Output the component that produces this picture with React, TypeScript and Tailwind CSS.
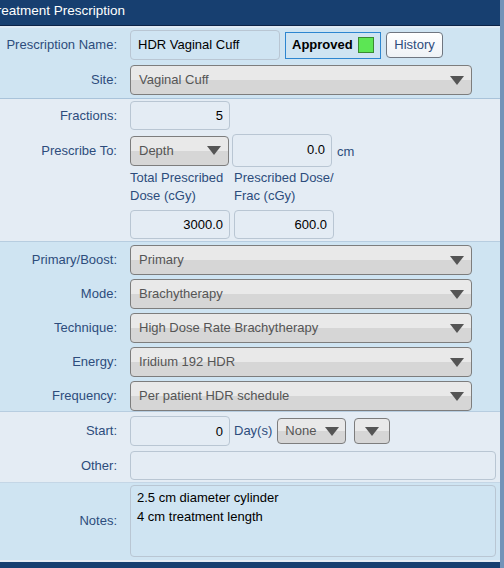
import React from 'react';

const Caret = () => (
  <svg width="14" height="9" viewBox="0 0 14 9" className="shrink-0">
    <path d="M0 0 H14 L7 9 Z" fill="#555" />
  </svg>
);

function Select({ value, className = '' }: { value: string; className?: string }) {
  return (
    <div
      className={`flex h-[30px] items-center justify-between rounded-[4px] border border-[#7d7d7d] bg-[linear-gradient(#e9e9e9_0%,#e9e9e9_50%,#d6d6d6_50%,#d6d6d6_100%)] pl-[8px] pr-[7px] text-[13px] text-[#555] ${className}`}
    >
      <span>{value}</span>
      <Caret />
    </div>
  );
}

function Input({ value = '', className = '', align = 'right' }: { value?: string; className?: string; align?: 'left' | 'right' }) {
  return (
    <div
      className={`flex h-[29px] items-center rounded-[4px] border border-[#b9c6d3] px-[6px] text-[13px] text-black ${align === 'right' ? 'justify-end' : ''} ${className}`}
    >
      {value}
    </div>
  );
}

function Label({ children }: { children: React.ReactNode }) {
  return <div className="w-[118px] shrink-0 pr-[1px] text-right text-[13px] text-[#2d4c7c]">{children}</div>;
}

function Row({ label, children, className = '' }: { label: string; children: React.ReactNode; className?: string }) {
  return (
    <div className={`flex items-center gap-[12px] ${className}`}>
      <Label>{label}</Label>
      {children}
    </div>
  );
}

export default function App() {
  return (
    <div className="flex h-[568px] w-[504px] overflow-hidden font-['Liberation_Sans',Arial,sans-serif]">
      <div className="flex w-[500px] flex-col bg-[#cfe4f2]">
        <div className="h-[26px] shrink-0 overflow-hidden border-b border-[#0b2246] bg-[#173f70]">
          <div className="ml-[-11px] whitespace-nowrap pt-[1px] text-[13.5px] leading-[20px] text-white">Treatment Prescription</div>
        </div>

        <div className="flex flex-col gap-[5px] border-t-2 border-b border-t-[#dfeaf4] border-b-[#a9c3da] bg-[#cfe4f2] pb-[3px] pt-[2px]">
          <Row label="Prescription Name:">
            <Input value="HDR Vaginal Cuff" align="left" className="h-[30px] w-[150px] pl-[7px]" />
            <div className="ml-[-7px] flex h-[27px] w-[96px] items-center gap-[5px] border border-[#2d86d0] pl-[6px] text-[13px] font-bold text-black">
              Approved
              <span className="h-[16px] w-[16px] border border-[#3a8a32] bg-[#5ce654]" />
            </div>
            <div className="ml-[-7px] flex h-[26px] w-[57px] items-center justify-center rounded-[4px] border border-[#6f7680] bg-[linear-gradient(#ffffff,#eef2f6)] text-[13px] text-[#2d4c7c]">
              History
            </div>
          </Row>
          <Row label="Site:">
            <Select value="Vaginal Cuff" className="w-[342px]" />
          </Row>
        </div>

        <div className="flex flex-col border-b border-[#b7cde0] bg-[#e4ecf4] pb-[2px] pt-[2px]">
          <Row label="Fractions:">
            <Input value="5" className="w-[100px]" />
          </Row>
          <Row label="Prescribe To:" className="mt-[4px]">
            <Select value="Depth" className="w-[99px]" />
            <div className="ml-[-9px] flex items-center gap-[5px]">
              <div className="flex h-[33px] w-[100px] justify-end rounded-[4px] border border-[#b9c6d3] px-[6px] pt-[5px] text-[13px] text-black">
                0.0
              </div>
              <span className="pt-[3px] text-[13px] text-[#2d4c7c]">cm</span>
            </div>
          </Row>
          <div className="ml-[130px] mt-[2px] flex gap-[4px] text-[13px] leading-[18px] text-[#2d4c7c]">
            <div className="w-[100px]">
              Total Prescribed
              <br />
              Dose (cGy)
            </div>
            <div className="w-[120px]">
              Prescribed Dose/
              <br />
              Frac (cGy)
            </div>
          </div>
          <div className="ml-[130px] mt-[5px] flex gap-[4px]">
            <Input value="3000.0" className="h-[26px] w-[100px]" />
            <Input value="600.0" className="h-[26px] w-[100px]" />
          </div>
        </div>

        <div className="flex flex-col gap-[4px] border-b border-[#b7cde0] bg-[#cfe4f2] pt-[3px]">
          <Row label="Primary/Boost:">
            <Select value="Primary" className="w-[342px]" />
          </Row>
          <Row label="Mode:">
            <Select value="Brachytherapy" className="w-[342px]" />
          </Row>
          <Row label="Technique:">
            <Select value="High Dose Rate Brachytherapy" className="w-[342px]" />
          </Row>
          <Row label="Energy:">
            <Select value="Iridium 192 HDR" className="w-[342px]" />
          </Row>
          <Row label="Frequency:">
            <Select value="Per patient HDR schedule" className="w-[342px]" />
          </Row>
        </div>

        <div className="flex flex-col gap-[5px] bg-[#e4ecf4] pb-[2px] pt-[4px]">
          <Row label="Start:">
            <Input value="0" className="h-[30px] w-[100px] items-start pt-[5px]" />
            <span className="ml-[-8px] text-[13px] text-[#2d4c7c]">Day(s)</span>
            <div className="ml-[-7px] flex h-[26px] w-[69px] items-center justify-between rounded-[4px] border border-[#7d7d7d] bg-[linear-gradient(#e9e9e9_0%,#e9e9e9_50%,#d6d6d6_50%,#d6d6d6_100%)] pl-[7px] pr-[6px] text-[13px] text-[#555]">
              None
              <Caret />
            </div>
            <div className="ml-[-4px] flex h-[26px] w-[36px] items-center justify-center rounded-[4px] border border-[#7d7d7d] bg-[linear-gradient(#e9e9e9_0%,#e9e9e9_50%,#d6d6d6_50%,#d6d6d6_100%)]">
              <Caret />
            </div>
          </Row>
          <Row label="Other:">
            <Input className="w-[366px]" />
          </Row>
        </div>

        <div className="flex flex-1 items-start gap-[12px] border-t border-[#c4d6e6] bg-[#cfe4f2] pt-[2px]">
          <div className="flex h-[72px] w-[118px] items-center justify-end pr-[1px] text-[13px] text-[#2d4c7c]">Notes:</div>
          <div className="h-[72px] w-[366px] rounded-[4px] border border-[#b9c6d3] px-[6px] pt-[2px] text-[13px] leading-[19px] text-black">
            2.5 cm diameter cylinder
            <br />4 cm treatment length
          </div>
        </div>
        <div className="h-[2px] shrink-0 bg-[#e4ecf4]" />
        <div className="h-[6px] shrink-0 bg-[#173f70]" />
      </div>
      <div className="w-[4px] bg-[#7393b8]" />
    </div>
  );
}
